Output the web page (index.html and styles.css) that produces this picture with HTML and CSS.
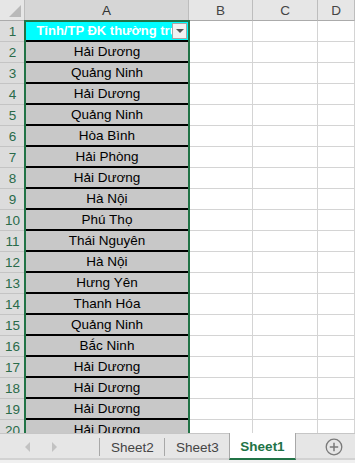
FILE: index.html
```html
<!DOCTYPE html>
<html lang="vi">
<head>
    <meta charset="UTF-8">
    <title>Sheet1</title>
    <link rel="stylesheet" href="styles.css">
</head>
<body>
    <div class="window">
        <div class="sheet">
            <div class="grid">
                <div class="corner"><span class="corner-tri"></span></div>
                <div class="col-head col-sel">A</div>
                <div class="col-head">B</div>
                <div class="col-head">C</div>
                <div class="col-head">D</div>

                <div class="row-head">1</div>
                <div class="cell-a title">
                    <span>Tỉnh/TP ĐK thường trú</span>
                    <span class="filter-btn"><span class="filter-arrow"></span></span>
                </div>
                <div class="cell"></div><div class="cell"></div><div class="cell"></div>

                <div class="row-head">2</div><div class="cell-a">Hải Dương</div><div class="cell"></div><div class="cell"></div><div class="cell"></div>
                <div class="row-head">3</div><div class="cell-a">Quảng Ninh</div><div class="cell"></div><div class="cell"></div><div class="cell"></div>
                <div class="row-head">4</div><div class="cell-a">Hải Dương</div><div class="cell"></div><div class="cell"></div><div class="cell"></div>
                <div class="row-head">5</div><div class="cell-a">Quảng Ninh</div><div class="cell"></div><div class="cell"></div><div class="cell"></div>
                <div class="row-head">6</div><div class="cell-a">Hòa Bình</div><div class="cell"></div><div class="cell"></div><div class="cell"></div>
                <div class="row-head">7</div><div class="cell-a">Hải Phòng</div><div class="cell"></div><div class="cell"></div><div class="cell"></div>
                <div class="row-head">8</div><div class="cell-a">Hải Dương</div><div class="cell"></div><div class="cell"></div><div class="cell"></div>
                <div class="row-head">9</div><div class="cell-a">Hà Nội</div><div class="cell"></div><div class="cell"></div><div class="cell"></div>
                <div class="row-head">10</div><div class="cell-a">Phú Thọ</div><div class="cell"></div><div class="cell"></div><div class="cell"></div>
                <div class="row-head">11</div><div class="cell-a">Thái Nguyên</div><div class="cell"></div><div class="cell"></div><div class="cell"></div>
                <div class="row-head">12</div><div class="cell-a">Hà Nội</div><div class="cell"></div><div class="cell"></div><div class="cell"></div>
                <div class="row-head">13</div><div class="cell-a">Hưng Yên</div><div class="cell"></div><div class="cell"></div><div class="cell"></div>
                <div class="row-head">14</div><div class="cell-a">Thanh Hóa</div><div class="cell"></div><div class="cell"></div><div class="cell"></div>
                <div class="row-head">15</div><div class="cell-a">Quảng Ninh</div><div class="cell"></div><div class="cell"></div><div class="cell"></div>
                <div class="row-head">16</div><div class="cell-a">Bắc Ninh</div><div class="cell"></div><div class="cell"></div><div class="cell"></div>
                <div class="row-head">17</div><div class="cell-a">Hải Dương</div><div class="cell"></div><div class="cell"></div><div class="cell"></div>
                <div class="row-head">18</div><div class="cell-a">Hải Dương</div><div class="cell"></div><div class="cell"></div><div class="cell"></div>
                <div class="row-head">19</div><div class="cell-a">Hải Dương</div><div class="cell"></div><div class="cell"></div><div class="cell"></div>
                <div class="row-head">20</div><div class="cell-a">Hải Dương</div><div class="cell"></div><div class="cell"></div><div class="cell"></div>
            </div>
            <!-- vùng chọn A1:A20 -->
            <div class="selection"></div>
        </div>

        <div class="tab-bar">
            <div class="tab-nav">
                <span class="nav-left"></span>
                <span class="nav-right"></span>
            </div>
            <div class="tab">Sheet2</div>
            <div class="tab">Sheet3</div>
            <div class="tab tab-active">Sheet1</div>
            <div class="tab-add">
                <svg width="18" height="18" viewBox="0 0 18 18">
                    <circle cx="9" cy="9" r="7.8" fill="none" stroke="#7a7a7a" stroke-width="1.3"/>
                    <path d="M9 4.8v8.4M4.8 9h8.4" stroke="#7a7a7a" stroke-width="1.5"/>
                </svg>
            </div>
        </div>
    </div>
</body>
</html>
```

FILE: styles.css
```css
body {
  margin: 0;
  font-family: "Liberation Sans", Arial, sans-serif;
  background: #ffffff;
}

.window {
  width: 355px;
  height: 463px;
  overflow: hidden;
  display: flex;
  flex-direction: column;
}

.sheet {
  position: relative;
  height: 433px;
  overflow: hidden;
  flex: none;
}

.grid {
  display: grid;
  grid-template-columns: 25px 164px 64px 65px 37px;
  grid-template-rows: 21px;
  grid-auto-rows: 21px;
}

.grid > div {
  box-sizing: border-box;
}

.corner {
  position: relative;
  background: #e6e6e6;
  border-right: 1px solid #bdbdbd;
  border-bottom: 1px solid #ababab;
}

.corner-tri {
  position: absolute;
  right: 3px;
  bottom: 3px;
  width: 0;
  height: 0;
  border-left: 12px solid transparent;
  border-bottom: 12px solid #b9b9b9;
}

.col-head {
  background: #e6e6e6;
  border-right: 1px solid #bdbdbd;
  border-bottom: 1px solid #ababab;
  color: #444444;
  font-size: 13.5px;
  padding-top: 1px;
  display: flex;
  align-items: center;
  justify-content: center;
}

.col-sel {
  background: #d6d6d6;
  color: #333333;
}

.row-head {
  background: #dcdcdc;
  border-bottom: 1px solid #c4c4c4;
  color: #2a6b4a;
  font-size: 13.5px;
  display: flex;
  align-items: center;
  justify-content: center;
}

.cell {
  border-right: 1px solid #d4d4d4;
  border-bottom: 1px solid #d4d4d4;
}

.cell-a {
  background: #c8c8c8;
  border-bottom: 2px solid #000000;
  color: #000000;
  font-size: 13.5px;
  display: flex;
  align-items: center;
  justify-content: center;
  white-space: nowrap;
  overflow: hidden;
}

.title {
  position: relative;
  background: #00ffff;
  color: #ffffff;
  font-weight: bold;
  font-size: 13px;
}

.filter-btn {
  position: absolute;
  right: 2px;
  top: 2px;
  width: 15px;
  height: 16px;
  box-sizing: border-box;
  background: #f2f2f2;
  border: 1px solid #a6a6a6;
  display: flex;
  align-items: center;
  justify-content: center;
}

.filter-arrow {
  width: 0;
  height: 0;
  border-left: 4px solid transparent;
  border-right: 4px solid transparent;
  border-top: 4px solid #555555;
}

.selection {
  position: absolute;
  left: 24px;
  top: 20px;
  width: 166px;
  height: 440px;
  box-sizing: border-box;
  border: 2px solid #217346;
  pointer-events: none;
}

.tab-bar {
  height: 30px;
  box-sizing: border-box;
  background: #e6e6e6;
  border-top: 1px solid #c6c6c6;
  border-bottom: 3px solid #f0f0f0;
  box-shadow: inset 0 -2px 0 #d2d2d2;
  display: flex;
  align-items: stretch;
  font-size: 13.5px;
}

.tab-nav {
  width: 100px;
  display: flex;
  align-items: center;
  gap: 22px;
  padding-left: 25px;
  box-sizing: border-box;
  position: relative;
}

.tab-nav::after,
.tab::after {
  content: "";
  position: absolute;
  right: 0;
  top: 4px;
  bottom: 4px;
  border-right: 1px solid #a8a8a8;
}

.nav-left {
  width: 0;
  height: 0;
  border-top: 5px solid transparent;
  border-bottom: 5px solid transparent;
  border-right: 5px solid #c2c2c2;
}

.nav-right {
  width: 0;
  height: 0;
  border-top: 5px solid transparent;
  border-bottom: 5px solid transparent;
  border-left: 5px solid #c2c2c2;
}

.tab {
  position: relative;
  width: 65px;
  display: flex;
  align-items: center;
  justify-content: center;
  color: #444444;
}

.tab-active {
  width: 67px;
  margin-top: -1px;
  background: #ffffff;
  border-left: 1px solid #a8a8a8;
  border-right: 1px solid #a8a8a8;
  border-bottom: 2px solid #217346;
  box-sizing: border-box;
  color: #217346;
  font-weight: bold;
  margin-left: -1px;
  padding-top: 1px;
}

.tab-active::after {
  display: none;
}

.tab-add {
  flex: 1;
  display: flex;
  align-items: center;
  justify-content: flex-end;
  padding-right: 12px;
}
```
